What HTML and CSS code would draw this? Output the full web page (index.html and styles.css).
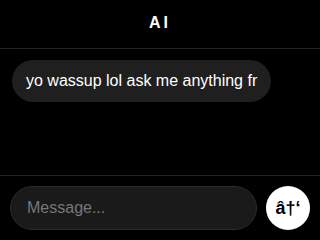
FILE: index.html
```html
<!DOCTYPE html>
<html>
<head>
<meta charset="utf-8">
<link rel="stylesheet" href="styles.css">
</head>
<body>
<div class="app">
  <header class="header">AI</header>
  <main class="messages">
    <div class="bubble">yo wassup lol ask me anything fr</div>
  </main>
  <footer class="composer">
    <div class="input">Message...</div>
    <button class="send">â†‘</button>
  </footer>
</div>
</body>
</html>
```
FILE: styles.css
```css
* { box-sizing: border-box; }
html, body { margin: 0; padding: 0; background: #000; }
body { font-family: "Liberation Sans", Arial, sans-serif; color: #fff; }
.app { width: 320px; height: 240px; display: flex; flex-direction: column; }
.header {
  height: 49px;
  border-bottom: 1px solid #222;
  display: flex; align-items: center; justify-content: center;
  font-weight: bold; font-size: 16px; letter-spacing: 3px;
  padding-bottom: 3px;
}
.messages { flex: 1; padding: 11px 12px; display: flex; flex-direction: column; align-items: flex-start; }
.bubble {
  background: #1f1f1f; border-radius: 21px;
  height: 42px; padding: 0 14px;
  display: flex; align-items: center;
  font-size: 16px; color: #fff;
}
.composer {
  border-top: 1px solid #222;
  padding: 10px;
  display: flex; gap: 9px; align-items: center;
}
.input {
  flex: 1; height: 44px; border-radius: 22px;
  background: #1a1a1a; border: 1px solid #2a2a2a;
  display: flex; align-items: center; padding-left: 16px;
  color: #777; font-size: 16px;
}
.send {
  width: 44px; height: 44px; border-radius: 50%;
  background: #fff; border: none; color: #000;
  font-family: "Liberation Sans", Arial, sans-serif;
  font-weight: bold; font-size: 18px; padding: 0;
  display: flex; align-items: center; justify-content: center;
}
```
